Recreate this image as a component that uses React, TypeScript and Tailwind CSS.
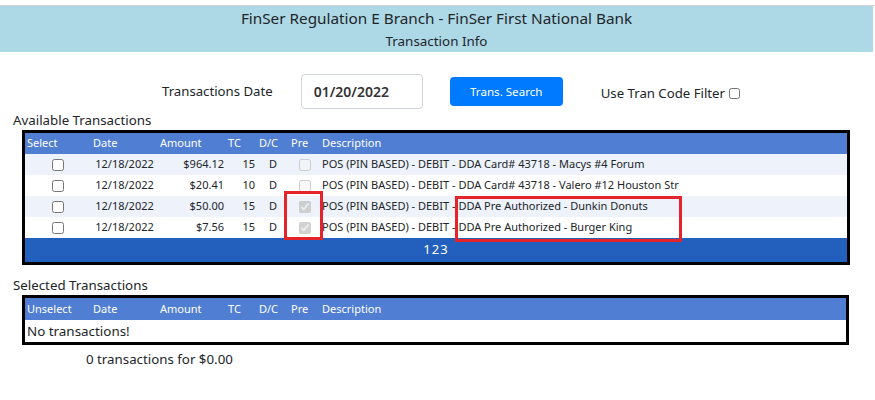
const COLS = 'grid grid-cols-[66px_67px_68px_31px_32px_31px_1fr] items-center';

const HEADERS = ['Date', 'Amount', 'TC', 'D/C', 'Pre', 'Description'];

type Txn = {
  date: string;
  amount: string;
  tc: string;
  dc: string;
  pre: boolean;
  description: string;
};

const AVAILABLE: Txn[] = [
  {
    date: '12/18/2022',
    amount: '$964.12',
    tc: '15',
    dc: 'D',
    pre: false,
    description: 'POS (PIN BASED) - DEBIT - DDA Card# 43718 - Macys #4 Forum',
  },
  {
    date: '12/18/2022',
    amount: '$20.41',
    tc: '10',
    dc: 'D',
    pre: false,
    description: 'POS (PIN BASED) - DEBIT - DDA Card# 43718 - Valero #12 Houston Str',
  },
  {
    date: '12/18/2022',
    amount: '$50.00',
    tc: '15',
    dc: 'D',
    pre: true,
    description: 'POS (PIN BASED) - DEBIT - DDA Pre Authorized - Dunkin Donuts',
  },
  {
    date: '12/18/2022',
    amount: '$7.56',
    tc: '15',
    dc: 'D',
    pre: true,
    description: 'POS (PIN BASED) - DEBIT - DDA Pre Authorized - Burger King',
  },
];

function HeaderRow({ first, height }: { first: string; height: string }) {
  return (
    <div className={`${COLS} ${height} bg-[#507ed2] text-white text-[11px]`}>
      <div className="pl-[2px]">{first}</div>
      {HEADERS.map((h) => (
        <div key={h} className="pl-[2px]">
          {h}
        </div>
      ))}
    </div>
  );
}

export default function App() {
  return (
    <div className="w-[875px] h-[400px] bg-white font-['Noto_Sans',sans-serif] text-[#212529]">
      {/* Banner */}
      <div className="mt-[5px] border-t border-[#d3d3d3]">
        <div className="mr-[2px] h-[46px] bg-[#add8e6] flex flex-col items-center">
          <div className="text-[15.3px] leading-[24px]">
            FinSer Regulation E Branch - FinSer First National Bank
          </div>
          <div className="text-[13.4px] leading-[22px]">Transaction Info</div>
        </div>
      </div>

      {/* Search bar */}
      <div className="mt-[22px] h-[35px] pl-[162px] flex items-center text-[13.2px]">
        <span>Transactions Date</span>
        <input
          type="text"
          defaultValue="01/20/2022"
          className="ml-[28px] w-[122px] h-[35px] px-[12px] border border-[#ced4da] rounded-[4px] text-[14px] font-semibold text-[#333] outline-none"
        />
        <button className="ml-[27px] w-[113px] h-[29px] bg-[#007bff] rounded-[4px] text-white text-[11.6px]">
          Trans. Search
        </button>
        <label className="ml-[38px] mt-[5px] flex items-center gap-[4px]">
          <span>Use Tran Code Filter</span>
          <input type="checkbox" className="w-[11px] h-[11px] m-0" />
        </label>
      </div>

      {/* Available */}
      <div className="mt-[2px] pl-[13px] leading-[18px] text-[13.3px]">
        Available Transactions
      </div>
      <div className="relative mt-[1px] ml-[22px] w-[828px] border-[3px] border-black">
        <HeaderRow first="Select" height="h-[21px]" />
        {AVAILABLE.map((t, i) => (
          <div
            key={i}
            className={`${COLS} h-[21px] text-[11px] ${i % 2 === 0 ? 'bg-[#edf2fb]' : 'bg-white'}`}
          >
            <div className="flex justify-center">
              <input type="checkbox" className="w-[12px] h-[12px] m-0" />
            </div>
            <div className="text-center">{t.date}</div>
            <div className="text-right pr-[2px]">{t.amount}</div>
            <div className="text-right pr-[2px]">{t.tc}</div>
            <div className="text-center">{t.dc}</div>
            <div className="flex justify-center">
              <input
                type="checkbox"
                disabled
                defaultChecked={t.pre}
                className="w-[12px] h-[12px] m-0"
              />
            </div>
            <div className="pl-[2px] whitespace-nowrap">{t.description}</div>
          </div>
        ))}
        <div className="h-[24px] bg-[#2360be] text-white text-[13px] flex items-center justify-center tracking-[1px]">
          123
        </div>

        {/* annotation boxes */}
        <div className="absolute left-[259px] top-[58px] w-[39px] h-[49px] border-[3px] border-[#e5232b]" />
        <div className="absolute left-[430px] top-[63px] w-[227px] h-[46px] border-[3px] border-[#e5232b]" />
      </div>

      {/* Selected */}
      <div className="mt-[11px] pl-[13px] leading-[18px] text-[13.3px]">
        Selected Transactions
      </div>
      <div className="mt-[1px] ml-[22px] w-[827px] border-[3px] border-black">
        <HeaderRow first="Unselect" height="h-[22px]" />
        <div className="h-[22px] pl-[2px] flex items-center text-[13.4px]">
          No transactions!
        </div>
      </div>
      <div className="mt-[5px] pl-[86px] leading-[18px] text-[13.3px]">
        0 transactions for $0.00
      </div>
    </div>
  );
}
